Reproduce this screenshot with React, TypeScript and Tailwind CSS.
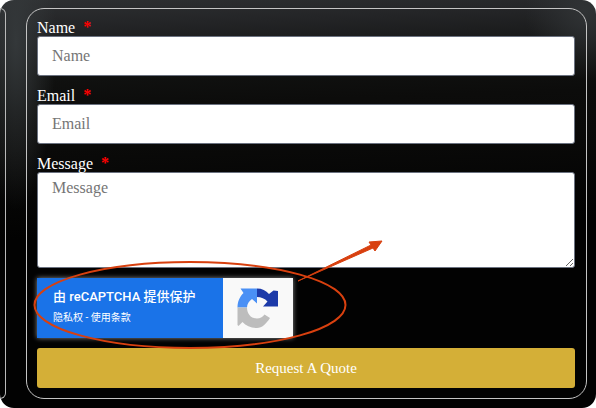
import React from 'react';

function Label({ text }: { text: string }) {
  return (
    <label className="block h-[18px] text-[16px] leading-[20px] text-white">
      {text}
      <span className="relative top-[-1px] ml-[8px] font-bold text-[#ff0000]">*</span>
    </label>
  );
}

function RecaptchaIcon() {
  return (
    <svg width="42" height="41" viewBox="0 0 42 41">
      {/* upper left, light blue */}
      <path d="M0.5 19.5 C0.5 13 3 8.5 6.5 5 L3.5 0.5 L20 0.5 L20 15.5 L15 11 C12 13 10 16 10 19.5 Z" fill="#4a90f5" />
      {/* upper right, dark blue */}
      <path d="M20 0.5 C25 0.5 29 2.5 32 6 L36.5 2.5 L41 3 L41 18.5 L26 18.5 L30.5 13.5 C28 10.5 24 9 20 9 Z" fill="#1c3aa9" />
      {/* lower half, grey */}
      <path d="M0.5 19.5 L10 19.5 C10 26 14 30.5 20 30.5 C23 30.5 25.5 29 27.5 26.5 L33 30 C29 36 25 40 20 40 C14 40 9 38 5.5 34 L1.5 38 L0.5 37 Z" fill="#bdbdbd" />
    </svg>
  );
}

const inputClass =
  'block h-[40px] w-[538px] rounded-[3px] border border-[#6b7280] bg-white px-[14px] text-[16px] outline-none placeholder:text-[#757575]';

export default function App() {
  return (
    <div className="relative h-[408px] w-[596px] overflow-hidden bg-white font-['Liberation_Serif',serif]">
      <div className="flex h-full rounded-[14px] bg-[radial-gradient(ellipse_40px_170px_at_16px_40px,#34383a,transparent),radial-gradient(ellipse_60px_70px_at_585px_10px,#303335,transparent),linear-gradient(178deg,#2e3032_0,#232426_30px,#111211_75px,#0c0c0b_110px,#0a0a09_150px,#020202_240px)] pt-[8px] pb-[9px]">
        {/* previous card edge */}
        <div className="h-full w-[6px] shrink-0 rounded-r-[18px] border-y border-r border-[#b9b9b9]" />
        <form className="ml-[20px] h-full w-[561px] shrink-0 rounded-[18px] border border-[#c4c4c4] pl-[10px] pr-[10px] pt-[9px]">
          <Label text="Name" />
          <input placeholder="Name" className={inputClass} />
          <div className="mt-[10px]">
            <Label text="Email" />
          </div>
          <input placeholder="Email" className={inputClass} />
          <div className="mt-[10px]">
            <Label text="Message" />
          </div>
          <textarea
            placeholder="Message"
            className="block h-[96px] w-[538px] rounded-[3px] border border-[#6b7280] bg-white px-[14px] py-[3px] text-[16px] outline-none placeholder:text-[#757575]"
          />
          <div className="mt-[10px] flex h-[60px] w-[256px] shadow-[0_0_5px_#8a8a8a]">
            <div className="flex w-[186px] flex-col bg-[#1a73e8] pl-[16px] pt-[10px] font-['Roboto','Noto_Sans_CJK_SC',sans-serif] text-white">
              <span className="text-[13px] leading-[18px] font-medium">由 reCAPTCHA 提供保护</span>
              <span className="mt-[5px] text-[10px] leading-[14px]">隐私权 - 使用条款</span>
            </div>
            <div className="flex w-[70px] items-center justify-center bg-[#f9f9f9]">
              <RecaptchaIcon />
            </div>
          </div>
          <button
            type="button"
            className="mt-[10px] block h-[40px] w-[538px] rounded-[3px] bg-[#d4af37] text-center text-[15px] text-white"
          >
            Request A Quote
          </button>
        </form>
      </div>

      {/* hand drawn annotation */}
      <svg className="pointer-events-none absolute top-0 left-0" width="596" height="408" viewBox="0 0 596 408">
        <ellipse cx="190" cy="305" rx="155.5" ry="43" fill="none" stroke="#d8400f" strokeWidth="2" />
        <path d="M298 281 L371 245 L369 242 L382 241 L375 251 L373 248 Z" fill="#d8400f" stroke="#d8400f" strokeWidth="1" />
      </svg>
    </div>
  );
}
